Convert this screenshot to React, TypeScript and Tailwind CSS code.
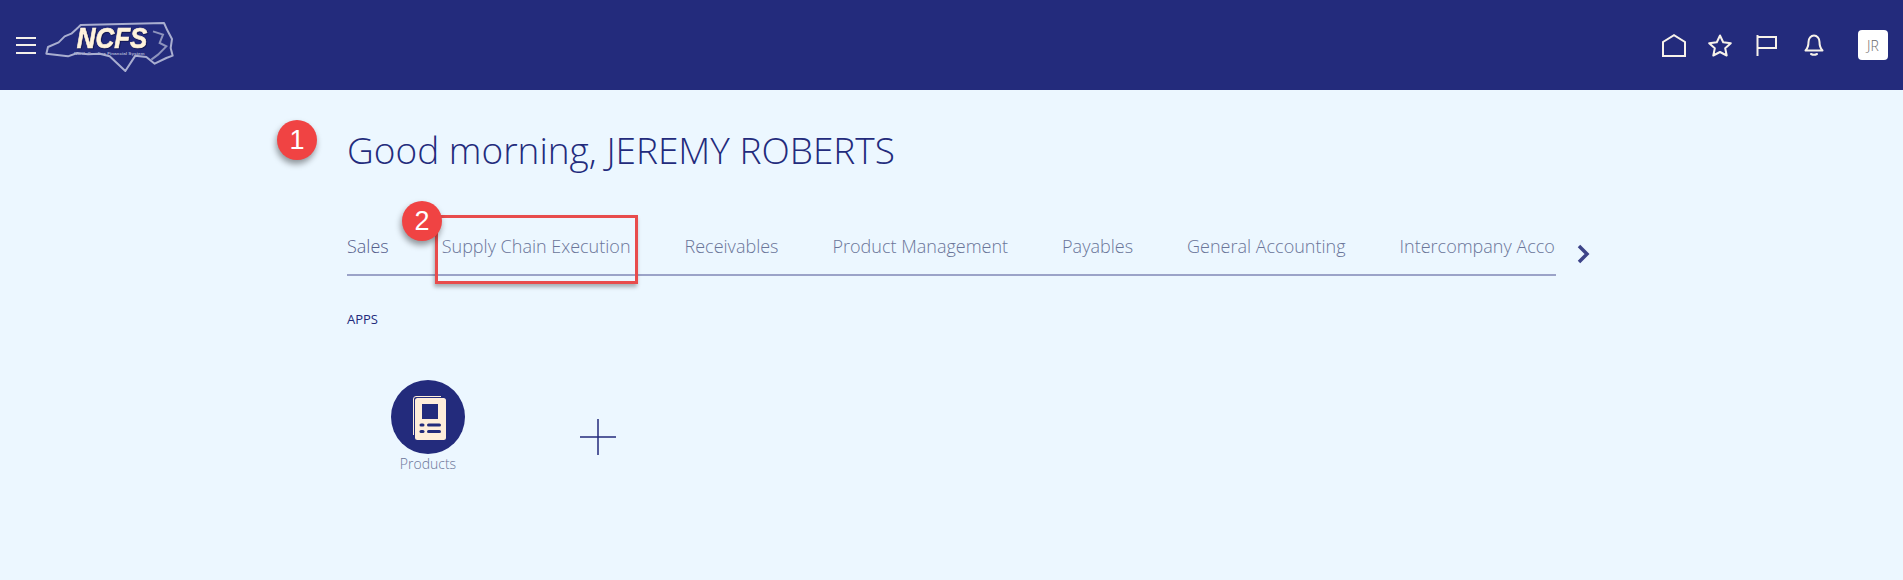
const tabs = ["Supply Chain Execution", "Receivables", "Product Management", "Payables", "General Accounting", "Intercompany Accounting"];

function Logo() {
  return (
    <svg width="140" height="65" viewBox="0 0 420 195" className="block shrink-0">
      <path
        d="M25 122 L30 102 L62 88 L80 70 L100 62 L122 42 L128 36 L378 30 L388 52 L402 78 L398 105 L404 128 L385 135 L350 152 L325 132 L292 128 L262 174 L215 130 L185 122 L150 124 L118 120 L90 130 Z"
        fill="none"
        stroke="#a9aed0"
        strokeWidth="6"
        strokeLinejoin="round"
      />
      <path d="M345 55 L375 65 L365 90 L385 100 L360 125 L340 140" fill="none" stroke="#8d93bd" strokeWidth="6" />
      <text x="116" y="106" fontFamily="'Liberation Sans', sans-serif" fontSize="88" fontWeight="700" fontStyle="italic" fill="#fff3dc" stroke="#fff3dc" strokeWidth="2" textLength="212" lengthAdjust="spacingAndGlyphs" className="drop-shadow-[2px_2px_2px_rgba(10,12,60,0.9)]">NCFS</text>
      <text x="108" y="127" fontFamily="'Liberation Sans', sans-serif" fontSize="13" fontWeight="700" fill="#a9aed0" textLength="212" lengthAdjust="spacingAndGlyphs">North Carolina Financial System</text>
    </svg>
  );
}

function ProductIcon() {
  return (
    <svg width="74" height="74" viewBox="0 0 74 74" className="block">
      <circle cx="37" cy="37" r="37" fill="#232b7c" />
      <path d="M22.5 55 V19 Q22.5 16.5 25 16.5 H50" fill="none" stroke="#ffeeda" strokeWidth="1" />
      <rect x="24" y="18" width="31" height="42" rx="2.5" fill="#ffeeda" />
      <rect x="31" y="24" width="16" height="15" fill="#232b7c" />
      <rect x="28.5" y="43.5" width="5" height="3" rx="1.5" fill="#232b7c" />
      <rect x="36" y="43.5" width="14" height="3" rx="1.5" fill="#232b7c" />
      <rect x="28.5" y="50" width="5" height="3" rx="1.5" fill="#232b7c" />
      <rect x="36" y="50" width="14" height="3" rx="1.5" fill="#232b7c" />
    </svg>
  );
}

function Badge({ n, className }: { n: string; className: string }) {
  return (
    <div className={`absolute flex h-10 w-10 items-center justify-center rounded-full bg-[#f04343] text-[27px] text-white shadow-[-1px_4px_6px_rgba(0,0,0,0.4)] font-['Liberation_Sans',sans-serif] ${className}`}>
      {n}
    </div>
  );
}

export default function App() {
  return (
    <div className="relative h-[580px] w-[1903px] overflow-hidden bg-[#ecf7ff] font-['Open_Sans',sans-serif] font-light">
      <header className="flex h-[90px] items-center bg-[#232b7c] pl-4 pr-[15px]">
        <div className="flex w-5 flex-col gap-[5.5px]">
          <span className="h-[2px] bg-[#f4f0ea]" />
          <span className="h-[2px] bg-[#f4f0ea]" />
          <span className="h-[2px] bg-[#f4f0ea]" />
        </div>
        <div className="ml-0.5">
          <Logo />
        </div>
        <div className="ml-auto flex items-center text-[#f7f2ea]">
          <svg width="24" height="23" viewBox="0 0 24 23" fill="none" stroke="currentColor" strokeWidth="2" className="mr-[22px]">
            <path d="M1 22 V8 L12 1.2 L23 8 V22 Z" strokeLinejoin="miter" />
          </svg>
          <svg width="24" height="23" viewBox="0 0 24 23" fill="none" stroke="currentColor" strokeWidth="2" className="mr-[24px]">
            <path d="M12 1.5 L15.2 8.3 L22.8 9.2 L17.2 14.2 L18.7 21.5 L12 18 L5.3 21.5 L6.8 14.2 L1.2 9.2 L8.8 8.3 Z" strokeLinejoin="round" />
          </svg>
          <svg width="21" height="21" viewBox="0 0 21 21" fill="none" stroke="currentColor" strokeWidth="2" className="mr-[27px]">
            <path d="M1.5 0 V21 M1.5 2 H20 V13 H1.5" />
          </svg>
          <svg width="20" height="22" viewBox="0 0 20 22" fill="none" stroke="currentColor" strokeWidth="2" strokeLinecap="round" strokeLinejoin="round" className="mr-[34px]">
            <path d="M1.5 16.5 H18.5 C16 14 15.5 12 15.5 8 A5.5 6.5 0 0 0 4.5 8 C4.5 12 4 14 1.5 16.5 Z" />
            <path d="M7 20 Q10 21.5 13 20" />
          </svg>
          <div className="flex h-[30px] w-[30px] items-center justify-center rounded-[4px] bg-white text-[14px] text-[#6b6b6b]">JR</div>
        </div>
      </header>

      <main className="pl-[347px]">
        <h1 className="pt-[33px] text-[37px] leading-[54px] text-[#232b7c]">Good morning, JEREMY ROBERTS</h1>
        <div className="mt-[53px] flex items-start">
          <div className="relative flex h-[46px] w-[1209px] overflow-hidden whitespace-nowrap border-b-2 border-[#9ba3c8] pt-[1px] text-[18px] leading-[30px] text-[#6a7599]">
            <span className="mr-[53px] text-[#565f8c]">Sales</span>
            {tabs.map((t) => (
              <span key={t} className="mr-[54px]">{t}</span>
            ))}
            <span className="absolute bottom-[-2px] left-0 h-[2px] w-[73px] bg-[#232b7c]" />
          </div>
          <svg width="14" height="20" viewBox="0 0 14 20" fill="none" stroke="#3d4489" strokeWidth="3.5" className="ml-[20px] mt-[14px]">
            <path d="M3 2 L11 10 L3 18" />
          </svg>
        </div>
        <div className="mt-[35px] text-[13px] font-normal leading-4 text-[#232b7c]">APPS</div>
        <div className="mt-[53px] flex items-start pl-[44px]">
          <div className="flex w-[74px] flex-col items-center">
            <ProductIcon />
            <span className="whitespace-nowrap text-[14px] leading-5 text-[#6a7599]">Products</span>
          </div>
          <svg width="36" height="36" viewBox="0 0 36 36" fill="none" stroke="#232b7c" strokeWidth="1.5" className="ml-[115px] mt-[39px]">
            <path d="M18 0 V36 M0 18 H36" />
          </svg>
        </div>
      </main>

      <div className="absolute left-[435px] top-[215px] h-[69px] w-[203px] border-[3px] border-[#e84c4c] shadow-[-1px_3px_4px_rgba(0,0,0,0.3)]" />
      <Badge n="1" className="left-[277px] top-[120px]" />
      <Badge n="2" className="left-[402px] top-[201px]" />
    </div>
  );
}
